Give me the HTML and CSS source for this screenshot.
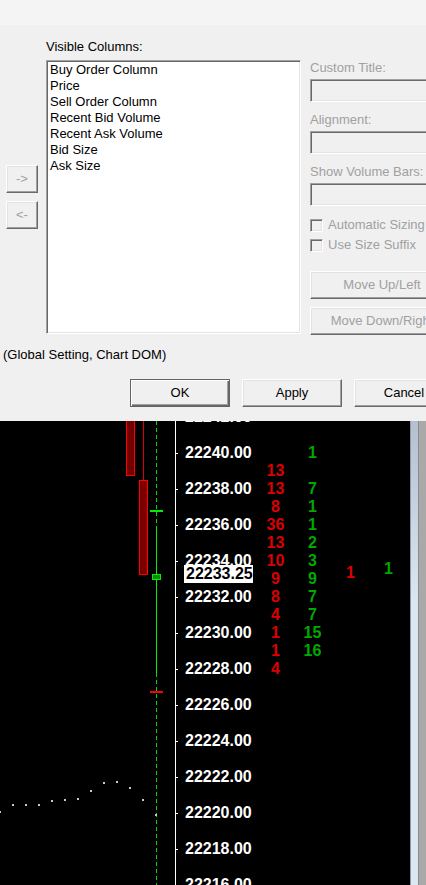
FILE: index.html
```html
<!DOCTYPE html>
<html>
  <head>
    <meta charset="utf-8">
    <title>Column Settings</title>
    <link rel="stylesheet" href="styles.css">
  </head>
  <body>
    <div class="dialog">
      <div class="dialog-top"></div>

      <div class="dialog-body">
        <div class="columns-label">Visible Columns:</div>

        <div class="arrows">
          <button class="btn arrow-btn" disabled>-&gt;</button>
          <button class="btn arrow-btn" disabled>&lt;-</button>
        </div>

        <ul class="listbox">
          <li>Buy Order Column</li>
          <li>Price</li>
          <li>Sell Order Column</li>
          <li>Recent Bid Volume</li>
          <li>Recent Ask Volume</li>
          <li>Bid Size</li>
          <li>Ask Size</li>
        </ul>

        <div class="props">
          <div class="field">
            <span class="field-label">Custom Title:</span>
            <input class="field-box" type="text" disabled>
          </div>
          <div class="field">
            <span class="field-label">Alignment:</span>
            <input class="field-box" type="text" disabled>
          </div>
          <div class="field">
            <span class="field-label">Show Volume Bars:</span>
            <input class="field-box" type="text" disabled>
          </div>

          <div class="checks">
            <label class="check-row"><span class="check"></span>Automatic Sizing</label>
            <label class="check-row"><span class="check"></span>Use Size Suffix</label>
          </div>

          <div class="move-buttons">
            <button class="btn move-btn" disabled>Move Up/Left</button>
            <button class="btn move-btn" disabled>Move Down/Right</button>
          </div>
        </div>
      </div>

      <div class="footnote">(Global Setting, Chart DOM)</div>

      <div class="footer">
        <button class="btn btn-default">OK</button>
        <button class="btn">Apply</button>
        <button class="btn">Cancel</button>
      </div>
    </div>

    <div class="chart">
      <div class="plot">
        <svg class="plot-lines" width="410" height="464" viewBox="0 0 410 464">
          <!-- price axis -->
          <rect x="175" y="0" width="1" height="464" fill="#fff"/>
          <g fill="#fff">
            <rect x="176" y="32" width="2" height="1"/>
            <rect x="176" y="68" width="2" height="1"/>
            <rect x="176" y="104" width="2" height="1"/>
            <rect x="176" y="140" width="2" height="1"/>
            <rect x="176" y="176" width="2" height="1"/>
            <rect x="176" y="212" width="2" height="1"/>
            <rect x="176" y="248" width="2" height="1"/>
            <rect x="176" y="284" width="2" height="1"/>
            <rect x="176" y="320" width="2" height="1"/>
            <rect x="176" y="356" width="2" height="1"/>
            <rect x="176" y="392" width="2" height="1"/>
            <rect x="176" y="428" width="2" height="1"/>
          </g>

          <!-- bars -->
          <rect x="126.5" y="-5" width="8" height="59.5" fill="#730000" stroke="#ff0000"/>
          <line x1="143.5" y1="0" x2="143.5" y2="59" stroke="#d80000"/>
          <rect x="139.5" y="59.5" width="8" height="94" fill="#7a0000" stroke="#ff0000"/>

          <!-- current bar range -->
          <line x1="156.5" y1="0" x2="156.5" y2="106" stroke="#00e000" stroke-dasharray="4 3"/>
          <line x1="156.5" y1="106" x2="156.5" y2="252" stroke="#00f000"/>
          <line x1="156.5" y1="252" x2="156.5" y2="464" stroke="#00e000" stroke-dasharray="4 3"/>
          <rect x="150" y="89" width="13" height="2" fill="#00f000"/>
          <rect x="150" y="270" width="13" height="2" fill="#ff0000"/>
          <rect x="152.5" y="153.5" width="8" height="5" fill="#0a8a0a" stroke="#00f000"/>

          <!-- study points -->
          <g fill="#c8c8c8">
            <rect x="-1" y="390" width="2" height="2"/>
            <rect x="12" y="383" width="2" height="2"/>
            <rect x="25" y="383" width="2" height="2"/>
            <rect x="38" y="383" width="2" height="2"/>
            <rect x="51" y="379" width="2" height="2"/>
            <rect x="64" y="378" width="2" height="2"/>
            <rect x="77" y="377" width="2" height="2"/>
            <rect x="90" y="369" width="2" height="2"/>
            <rect x="103" y="361" width="2" height="2"/>
            <rect x="116" y="360" width="2" height="2"/>
            <rect x="129" y="366" width="2" height="2"/>
            <rect x="142" y="378" width="2" height="2"/>
            <rect x="155" y="393" width="2" height="2"/>
          </g>
        </svg>

        <ul class="ladder">
          <li><span class="px">22242.00</span><span class="bid"></span><span class="ask"></span></li>
          <li><span class="px"></span><span class="bid"></span><span class="ask"></span></li>
          <li><span class="px">22240.00</span><span class="bid"></span><span class="ask">1</span></li>
          <li><span class="px"></span><span class="bid">13</span><span class="ask"></span></li>
          <li><span class="px">22238.00</span><span class="bid">13</span><span class="ask">7</span></li>
          <li><span class="px"></span><span class="bid">8</span><span class="ask">1</span></li>
          <li><span class="px">22236.00</span><span class="bid">36</span><span class="ask">1</span></li>
          <li><span class="px"></span><span class="bid">13</span><span class="ask">2</span></li>
          <li><span class="px">22234.00</span><span class="bid">10</span><span class="ask">3</span></li>
          <li><span class="px"></span><span class="bid">9</span><span class="ask">9</span></li>
          <li><span class="px">22232.00</span><span class="bid">8</span><span class="ask">7</span></li>
          <li><span class="px"></span><span class="bid">4</span><span class="ask">7</span></li>
          <li><span class="px">22230.00</span><span class="bid">1</span><span class="ask">15</span></li>
          <li><span class="px"></span><span class="bid">1</span><span class="ask">16</span></li>
          <li><span class="px">22228.00</span><span class="bid">4</span><span class="ask"></span></li>
          <li><span class="px"></span><span class="bid"></span><span class="ask"></span></li>
          <li><span class="px">22226.00</span><span class="bid"></span><span class="ask"></span></li>
          <li><span class="px"></span><span class="bid"></span><span class="ask"></span></li>
          <li><span class="px">22224.00</span><span class="bid"></span><span class="ask"></span></li>
          <li><span class="px"></span><span class="bid"></span><span class="ask"></span></li>
          <li><span class="px">22222.00</span><span class="bid"></span><span class="ask"></span></li>
          <li><span class="px"></span><span class="bid"></span><span class="ask"></span></li>
          <li><span class="px">22220.00</span><span class="bid"></span><span class="ask"></span></li>
          <li><span class="px"></span><span class="bid"></span><span class="ask"></span></li>
          <li><span class="px">22218.00</span><span class="bid"></span><span class="ask"></span></li>
          <li><span class="px"></span><span class="bid"></span><span class="ask"></span></li>
          <li><span class="px">22216.00</span><span class="bid"></span><span class="ask"></span></li>
        </ul>

        <div class="last-price">22233.25</div>
        <span class="trade trade-sell">1</span>
        <span class="trade trade-buy">1</span>
      </div>

      <div class="scrollbar"></div>
    </div>
  </body>
</html>
```

FILE: styles.css
```css
:root {
  --face: #f0f0f0;
  --face-top: #f4f4f4;
  --shadow: #a0a0a0;
  --dark-shadow: #696969;
  --light: #e3e3e3;
  --highlight: #ffffff;
  --gray-text: #a0a0a0;
  --bid: #dc0000;
  --ask: #00a800;
}

body {
  width: 426px;
  height: 885px;
  margin: 0;
  overflow: hidden;
  background: #000;
  color: #000;
  font-family: "Liberation Sans", Arial, sans-serif;
  font-size: 13px;
  line-height: 16px;
}

/* Settings dialog */
.dialog {
  height: 421px;
  background: var(--face);
  overflow: hidden;
}

.dialog-top {
  height: 25px;
  background: var(--face-top);
}

.dialog-body {
  display: grid;
  grid-template-columns: 32px 255px 144px;
  grid-template-rows: 16px auto;
  column-gap: 8px;
  row-gap: 5px;
  padding: 14px 0 0 6px;
}

.columns-label {
  grid-column: 2;
  grid-row: 1;
}

.arrows {
  grid-column: 1;
  grid-row: 2;
  display: flex;
  flex-direction: column;
  justify-content: center;
  gap: 8px;
  height: 274px;
}

.listbox {
  grid-column: 2;
  grid-row: 2;
  box-sizing: border-box;
  height: 274px;
  margin: 0;
  padding: 1px 3px;
  list-style: none;
  background: #fff;
  border: 1px solid;
  border-color: var(--shadow) var(--highlight) var(--highlight) var(--shadow);
  box-shadow: inset 1px 1px var(--dark-shadow), inset -1px -1px var(--light);
}

.props {
  grid-column: 3;
  grid-row: 2;
  display: flex;
  flex-direction: column;
  margin-left: 1px;
  color: var(--gray-text);
}

.field {
  display: flex;
  flex-direction: column;
  gap: 3px;
  margin-bottom: 10px;
}

.field-box {
  box-sizing: border-box;
  width: 144px;
  height: 23px;
  margin: 0;
  padding: 0;
  background: var(--face);
  border: 1px solid;
  border-color: var(--shadow) var(--highlight) var(--highlight) var(--shadow);
  box-shadow: inset 1px 1px var(--dark-shadow), inset -1px -1px var(--light);
}

.checks {
  display: flex;
  flex-direction: column;
  margin-top: -1px;
}

.check-row {
  display: flex;
  align-items: center;
  gap: 5px;
  height: 20px;
}

.check {
  box-sizing: border-box;
  width: 13px;
  height: 13px;
  background: var(--face);
  border: 1px solid;
  border-color: var(--shadow) var(--highlight) var(--highlight) var(--shadow);
  box-shadow: inset 1px 1px var(--dark-shadow), inset -1px -1px var(--light);
}

.move-buttons {
  display: flex;
  flex-direction: column;
  gap: 8px;
  margin-top: 16px;
}

/* Classic 3D push button */
.btn {
  box-sizing: border-box;
  height: 28px;
  margin: 0;
  padding: 0;
  font: inherit;
  color: #000;
  background: var(--face);
  border: 1px solid;
  border-color: var(--highlight) var(--dark-shadow) var(--dark-shadow) var(--highlight);
  box-shadow: inset -1px -1px var(--shadow), inset 1px 1px var(--light);
  white-space: nowrap;
}

.btn:disabled {
  color: var(--gray-text);
}

.btn-default {
  border-color: #646464;
  box-shadow: inset 1px 1px var(--highlight), inset -1px -1px var(--dark-shadow), inset -2px -2px var(--shadow);
}

.arrow-btn {
  width: 32px;
}

.move-btn {
  width: 144px;
}

.footnote {
  margin-top: 12px;
  padding-left: 3px;
}

.footer {
  display: flex;
  gap: 12px;
  margin-top: 16px;
  padding-left: 130px;
}

.footer .btn {
  flex: 0 0 100px;
  width: 100px;
}

/* Chart DOM */
.chart {
  display: flex;
  height: 464px;
}

.plot {
  position: relative;
  width: 410px;
  overflow: hidden;
  background: #000;
}

.plot-lines {
  position: absolute;
  top: 0;
  left: 0;
}

.ladder {
  margin: -13px 0 0;
  padding: 0 0 0 185px;
  list-style: none;
  font-weight: bold;
  font-size: 16px;
  line-height: 18px;
}

.ladder li {
  display: grid;
  grid-template-columns: 72px 37px 37px;
  height: 18px;
}

.px {
  color: #fff;
}

.bid,
.ask {
  text-align: center;
}

.bid {
  color: var(--bid);
}

.ask {
  color: var(--ask);
}

.last-price {
  position: absolute;
  top: 144px;
  left: 184px;
  box-sizing: border-box;
  width: 69px;
  height: 18px;
  padding-left: 2px;
  background: #fff;
  color: #000;
  font-weight: bold;
  font-size: 16px;
  line-height: 18px;
}

.trade {
  position: absolute;
  font-weight: bold;
  font-size: 16px;
  line-height: 18px;
}

.trade-sell {
  top: 143px;
  left: 346px;
  color: var(--bid);
}

.trade-buy {
  top: 139px;
  left: 384px;
  color: var(--ask);
}

.scrollbar {
  width: 16px;
  background:
    linear-gradient(to right, #8e9aaa 0 1px, transparent 1px 8px, #8c8c8c 8px 9px, #a9a9a9 9px),
    linear-gradient(#b4c0ce, #dce7f3 40%, #dce7f3);
}
```
